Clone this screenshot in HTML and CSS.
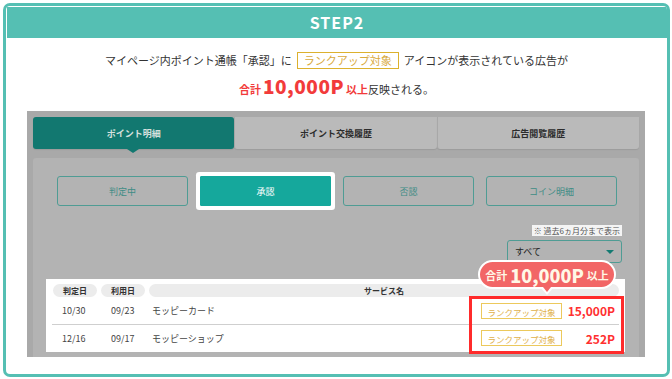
FILE: index.html
```html
<!DOCTYPE html>
<html lang="ja">
<head>
    <meta charset="UTF-8">
    <title>STEP2</title>
    <link rel="stylesheet" href="styles.css">
</head>
<body>

    <div class="frame">
        <h2 class="step-head">STEP2</h2>

        <div class="lead">
            <p class="lead-line">マイページ内ポイント通帳「承認」に<span class="rank-tag">ランクアップ対象</span>アイコンが表示されている広告が</p>
            <p class="lead-line lead-sum"><span class="accent">合計<b class="accent-big">10,000P</b>以上</span>反映される。</p>
        </div>

        <div class="shot">
            <div class="tabs">
                <div class="tab tab-active">ポイント明細</div>
                <div class="tab">ポイント交換履歴</div>
                <div class="tab">広告閲覧履歴</div>
            </div>

            <div class="panel">
                <div class="filters">
                    <div class="filter">判定中</div>
                    <div class="filter filter-on">承認</div>
                    <div class="filter">否認</div>
                    <div class="filter">コイン明細</div>
                </div>

                <div class="range">
                    <span class="range-note">※ 過去6ヵ月分まで表示</span>
                    <div class="range-select">すべて<span class="caret"></span></div>
                </div>

                <div class="ledger">
                    <div class="ledger-head">
                        <span class="pill pill-date">判定日</span>
                        <span class="pill pill-date">利用日</span>
                        <span class="pill pill-name">サービス名</span>
                    </div>
                    <div class="ledger-row">
                        <span class="cell-judge">10/30</span>
                        <span class="cell-use">09/23</span>
                        <span class="cell-name">モッピーカード</span>
                        <span class="cell-tag">ランクアップ対象</span>
                        <span class="cell-pt">15,000P</span>
                    </div>
                    <div class="ledger-row">
                        <span class="cell-judge">12/16</span>
                        <span class="cell-use">09/17</span>
                        <span class="cell-name">モッピーショップ</span>
                        <span class="cell-tag">ランクアップ対象</span>
                        <span class="cell-pt">252P</span>
                    </div>

                    <div class="rank-box"></div>
                    <div class="total-bubble">合計<b>10,000P</b>以上</div>
                </div>
            </div>
        </div>
    </div>

</body>
</html>
```

FILE: styles.css
```css
body {
    margin: 0;
    font-family: "Noto Sans CJK JP", "Noto Sans", sans-serif;
    color: #333;
    background: #fff;
}

.frame {
    margin: 3px;
    width: 661px;
    height: 368px;
    border: 3px solid #55bfb3;
    border-radius: 7px;
    overflow: hidden;
}

.step-head {
    margin: 1px 0 0 1px;
    height: 31px;
    line-height: 31px;
    background: #55bfb3;
    color: #fff;
    font-size: 16px;
    font-weight: bold;
    letter-spacing: 1px;
    text-align: center;
}

/* lead text */
.lead {
    padding: 13px 0 10px;
    text-align: center;
}

.lead-line {
    margin: 0;
    font-size: 11px;
    line-height: 18px;
    color: #333;
}

.lead-sum {
    margin-top: 5px;
    line-height: 24px;
}

.rank-tag {
    display: inline-block;
    margin: 0 5px;
    padding: 0 6px;
    height: 15px;
    line-height: 15px;
    border: 1px solid #dcb12e;
    color: #d8a93c;
    vertical-align: 0;
}

.accent {
    color: #f23b3b;
    font-weight: bold;
}

.accent-big {
    font-size: 19px;
    margin: 0 2px;
    letter-spacing: 0.5px;
}

/* screenshot */
.shot {
    margin-left: 21px;
    width: 618px;
    height: 246px;
    padding: 6px 0 0 6px;
    box-sizing: border-box;
    background: #a9a9a9;
}

.tabs {
    display: flex;
    width: 606px;
    height: 32px;
}

.tab {
    flex: 1;
    display: flex;
    align-items: center;
    justify-content: center;
    background: #bababa;
    font-size: 9px;
    font-weight: bold;
    color: #2c2c2c;
    border-left: 1px solid #a8a8a8;
    border-radius: 0 0 3px 3px;
    box-shadow: 0 1px 1px rgba(0,0,0,0.08);
}

.tab-active {
    position: relative;
    background: #127870;
    color: #d6e0de;
    border-left: none;
    border-radius: 3px;
}

.tab-active::after {
    content: "";
    position: absolute;
    left: 94px;
    bottom: -4px;
    border-left: 6px solid transparent;
    border-right: 6px solid transparent;
    border-top: 4px solid #127870;
}

.panel {
    margin-top: 9px;
    width: 606px;
    height: 199px;
    background: #b3b3b3;
    border-radius: 3px 3px 0 0;
    padding: 18px 0 0;
    box-sizing: border-box;
}

.filters {
    display: flex;
    gap: 12px;
    padding-left: 24px;
}

.filter {
    width: 131px;
    height: 30px;
    box-sizing: border-box;
    display: flex;
    align-items: center;
    justify-content: center;
    border: 1px solid #4f9c94;
    border-radius: 3px;
    font-size: 9px;
    color: #3f8c85;
}

.filter-on {
    background: #15a89c;
    border-color: #15a89c;
    border-radius: 1px;
    color: #fff;
    box-shadow: 0 0 0 4px #fff;
}

.range {
    display: flex;
    flex-direction: column;
    align-items: flex-end;
    padding-right: 17px;
    margin-top: 19px;
}

.range-note {
    background: #f4f4f4;
    font-size: 8px;
    line-height: 11px;
    padding: 0 2px;
    color: #555;
}

.range-select {
    position: relative;
    margin-top: 4px;
    width: 115px;
    height: 23px;
    box-sizing: border-box;
    border: 1px solid #4f9c94;
    border-radius: 3px;
    font-size: 9px;
    line-height: 21px;
    padding-left: 7px;
    color: #222;
}

.caret {
    position: absolute;
    right: 7px;
    top: 9px;
    border-left: 4px solid transparent;
    border-right: 4px solid transparent;
    border-top: 4px solid #147a72;
}

/* ledger table */
.ledger {
    position: relative;
    margin: 16px 14px 0 13px;
    height: 73px;
    background: #fff;
    font-size: 9px;
}

.ledger-head {
    display: flex;
    padding: 5px 6px 0 7px;
}

.pill {
    height: 13px;
    line-height: 13px;
    background: #ececec;
    border-radius: 7px;
    font-size: 8px;
    font-weight: bold;
    text-align: center;
    color: #333;
}

.pill-date {
    width: 44px;
    margin-right: 4px;
}

.pill-name {
    flex: 1;
}

.ledger-row {
    display: flex;
    align-items: center;
    height: 27px;
    margin: 0 6px;
    color: #444;
}

.ledger-row + .ledger-row {
    border-top: 1px solid #cfcfcf;
    height: 26px;
}

.cell-judge {
    width: 59px;
    padding-left: 10px;
    box-sizing: border-box;
}

.cell-use {
    width: 41px;
}

.cell-name {
    flex: 1;
}

.cell-tag {
    width: 81px;
    height: 16px;
    line-height: 16px;
    box-sizing: border-box;
    border: 1px solid #ecc95c;
    text-align: center;
    color: #e0b04a;
    font-size: 8.5px;
}

.cell-pt {
    width: 57px;
    text-align: right;
    padding-right: 4px;
    box-sizing: border-box;
    font-size: 12px;
    font-weight: bold;
    color: #ff3030;
}

.rank-box {
    position: absolute;
    left: 423px;
    top: 17px;
    width: 155px;
    height: 58px;
    box-sizing: border-box;
    border: 3px solid #ff2b2b;
}

.total-bubble {
    position: absolute;
    left: 432px;
    top: -19px;
    width: 138px;
    height: 29px;
    box-sizing: border-box;
    border: 2px solid #fff;
    border-radius: 15px;
    background: #f26666;
    color: #fff8e6;
    font-size: 11px;
    font-weight: bold;
    display: flex;
    align-items: center;
    justify-content: center;
    gap: 3px;
}

.total-bubble b {
    font-size: 18px;
    line-height: 1;
}

.total-bubble::before {
    content: "";
    position: absolute;
    left: 61px;
    bottom: -8px;
    border-left: 6px solid transparent;
    border-right: 6px solid transparent;
    border-top: 7px solid #fff;
}

.total-bubble::after {
    content: "";
    position: absolute;
    left: 63px;
    bottom: -5px;
    border-left: 4px solid transparent;
    border-right: 4px solid transparent;
    border-top: 5px solid #f26666;
}
```
